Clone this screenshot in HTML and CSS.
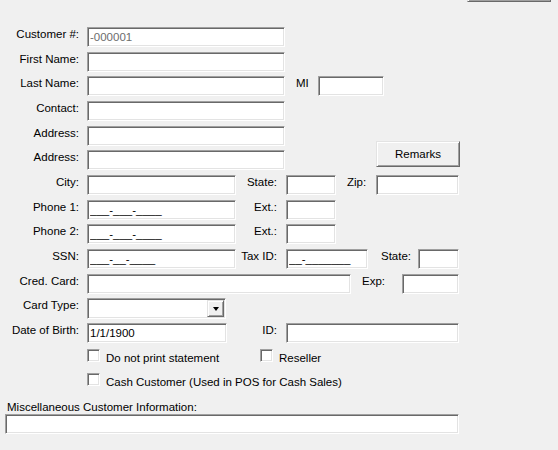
FILE: index.html
```html
<!DOCTYPE html>
<html>
<head>
    <title>Customer</title>
    <link rel="stylesheet" href="styles.css">
</head>
<body>
    <div class="topbar">
        <button class="btn btn-top" type="button"></button>
    </div>
    <form class="customer-form">
        <div class="row">
            <label class="lbl">Customer #:</label>
            <input class="field w-full dim" type="text" value="-000001" readonly>
        </div>
        <div class="row">
            <label class="lbl">First Name:</label>
            <input class="field w-full" type="text">
        </div>
        <div class="row">
            <label class="lbl">Last Name:</label>
            <input class="field w-full" type="text">
            <label class="tag tag-mi">MI</label>
            <input class="field w-mi" type="text">
        </div>
        <div class="row">
            <label class="lbl">Contact:</label>
            <input class="field w-full" type="text">
        </div>
        <div class="row">
            <label class="lbl">Address:</label>
            <input class="field w-full" type="text">
        </div>
        <div class="row">
            <label class="lbl">Address:</label>
            <input class="field w-full" type="text">
            <button class="btn btn-remarks" type="button">Remarks</button>
        </div>
        <div class="row">
            <label class="lbl">City:</label>
            <input class="field w-mid" type="text">
            <label class="mid">State:</label>
            <input class="field w-sm" type="text">
            <label class="tag tag-zip">Zip:</label>
            <input class="field w-zip" type="text">
        </div>
        <div class="row">
            <label class="lbl">Phone 1:</label>
            <input class="field w-mid" type="text" value="___-___-____">
            <label class="mid">Ext.:</label>
            <input class="field w-sm" type="text">
        </div>
        <div class="row">
            <label class="lbl">Phone 2:</label>
            <input class="field w-mid" type="text" value="___-___-____">
            <label class="mid">Ext.:</label>
            <input class="field w-sm" type="text">
        </div>
        <div class="row">
            <label class="lbl">SSN:</label>
            <input class="field w-mid" type="text" value="___-__-____">
            <label class="mid">Tax ID:</label>
            <input class="field w-tax" type="text" value="__-_______">
            <label class="tag tag-state">State:</label>
            <input class="field w-state" type="text">
        </div>
        <div class="row">
            <label class="lbl">Cred. Card:</label>
            <input class="field w-card" type="text">
            <label class="tag tag-exp">Exp:</label>
            <input class="field w-exp" type="text">
        </div>
        <div class="row">
            <label class="lbl">Card Type:</label>
            <div class="combo">
                <span class="drop"><span class="arrow"></span></span>
            </div>
        </div>
        <div class="row">
            <label class="lbl">Date of Birth:</label>
            <input class="field w-dob" type="text" value="1/1/1900">
            <label class="mid mid-wide">ID:</label>
            <input class="field w-id" type="text">
        </div>
        <div class="row row-check">
            <div class="check-item check-first">
                <span class="check"></span>
                <span class="check-text">Do not print statement</span>
            </div>
            <div class="check-item">
                <span class="check"></span>
                <span class="check-text">Reseller</span>
            </div>
        </div>
        <div class="row row-check">
            <div class="check-item">
                <span class="check"></span>
                <span class="check-text">Cash Customer (Used in POS for Cash Sales)</span>
            </div>
        </div>
    </form>
    <div class="misc">
        <label class="misc-label">Miscellaneous Customer Information:</label>
        <input class="field w-misc" type="text">
    </div>
</body>
</html>
```

FILE: styles.css
```css
* {
    box-sizing: border-box;
    margin: 0;
    padding: 0;
}

body {
    background: #f0f0f0;
    font-family: 'Liberation Sans', Arial, sans-serif;
    font-size: 11.5px;
    color: #000;
    width: 558px;
    height: 450px;
    overflow: hidden;
}

/* classic sunken edit box */
.field {
    display: block;
    height: 20px;
    padding: 0 2px;
    background: #fff;
    border: 1px solid;
    border-color: #a0a0a0 #fff #fff #a0a0a0;
    box-shadow: inset 1px 1px #696969, inset -1px -1px #e3e3e3;
    font: inherit;
    color: #000;
    outline: none;
}

.field.dim {
    color: #6d6d6d;
}

.w-full { width: 198px; }
.w-mid { width: 149px; }
.w-sm { width: 50px; }
.w-mi { width: 66px; }
.w-zip { width: 83px; }
.w-tax { width: 82px; }
.w-state { width: 41px; }
.w-card { width: 264px; }
.w-exp { width: 57px; }
.w-dob { width: 140px; }
.w-id { width: 173px; }
.w-misc { width: 454px; }

/* raised push button */
.btn {
    display: block;
    background: #f0f0f0;
    border: 1px solid;
    border-color: #e3e3e3 #696969 #696969 #e3e3e3;
    box-shadow: inset 1px 1px #fff, inset -1px -1px #a0a0a0;
    font: inherit;
    color: #000;
}

/* strip along the top edge, only the foot of its button shows */
.topbar {
    display: flex;
    align-items: flex-start;
    height: 2px;
    padding-left: 467px;
}

.btn-top {
    width: 84px;
    height: 26px;
    margin-top: -24px;
}

.btn-remarks {
    width: 84px;
    height: 26px;
    margin-left: 91px;
    margin-top: -9px;
    padding-bottom: 1px;
}

.customer-form {
    display: grid;
    grid-auto-rows: 24.67px;
    padding-top: 25px;
}

.row {
    display: flex;
    align-items: flex-start;
    white-space: nowrap;
}

.lbl {
    width: 79px;
    margin-right: 8px;
    margin-top: 1px;
    line-height: 13px;
    text-align: right;
}

/* label between the first and second column of boxes */
.mid {
    width: 41px;
    margin-right: 9px;
    margin-top: 1px;
    line-height: 13px;
    text-align: right;
}

.mid-wide {
    width: 50px;
}

.tag {
    margin-top: 1px;
    line-height: 13px;
}

.tag-mi { width: 22px; margin-left: 11px; }
.tag-zip { width: 29px; margin-left: 11px; }
.tag-state { width: 37px; margin-left: 13px; }
.tag-exp { width: 40px; margin-left: 11px; }

.combo {
    display: flex;
    justify-content: flex-end;
    width: 139px;
    height: 21px;
    padding: 1px;
    background: #fff;
    border: 1px solid;
    border-color: #a0a0a0 #fff #fff #a0a0a0;
    box-shadow: inset 1px 1px #696969, inset -1px -1px #e3e3e3;
}

.drop {
    display: flex;
    align-items: center;
    justify-content: center;
    width: 17px;
    height: 17px;
    background: #f0f0f0;
    border: 1px solid;
    border-color: #e3e3e3 #696969 #696969 #e3e3e3;
    box-shadow: inset 1px 1px #fff, inset -1px -1px #a0a0a0;
}

.arrow {
    width: 0;
    height: 0;
    border-top: 4px solid #000;
    border-left: 3.5px solid transparent;
    border-right: 3.5px solid transparent;
    margin-top: 1px;
}

.row-check {
    padding-left: 87px;
}

.check-item {
    display: flex;
    align-items: flex-start;
    margin-top: 1px;
}

.check-first {
    width: 173px;
}

.check {
    width: 13px;
    height: 13px;
    background: #fff;
    border: 1px solid;
    border-color: #a0a0a0 #fff #fff #a0a0a0;
    box-shadow: inset 1px 1px #696969, inset -1px -1px #e3e3e3;
}

.check-text {
    margin-left: 6px;
    margin-top: 3px;
    line-height: 13px;
}

.misc {
    padding-left: 5px;
}

.misc-label {
    display: block;
    padding-left: 2px;
    margin-top: 3px;
    line-height: 14px;
}
```
